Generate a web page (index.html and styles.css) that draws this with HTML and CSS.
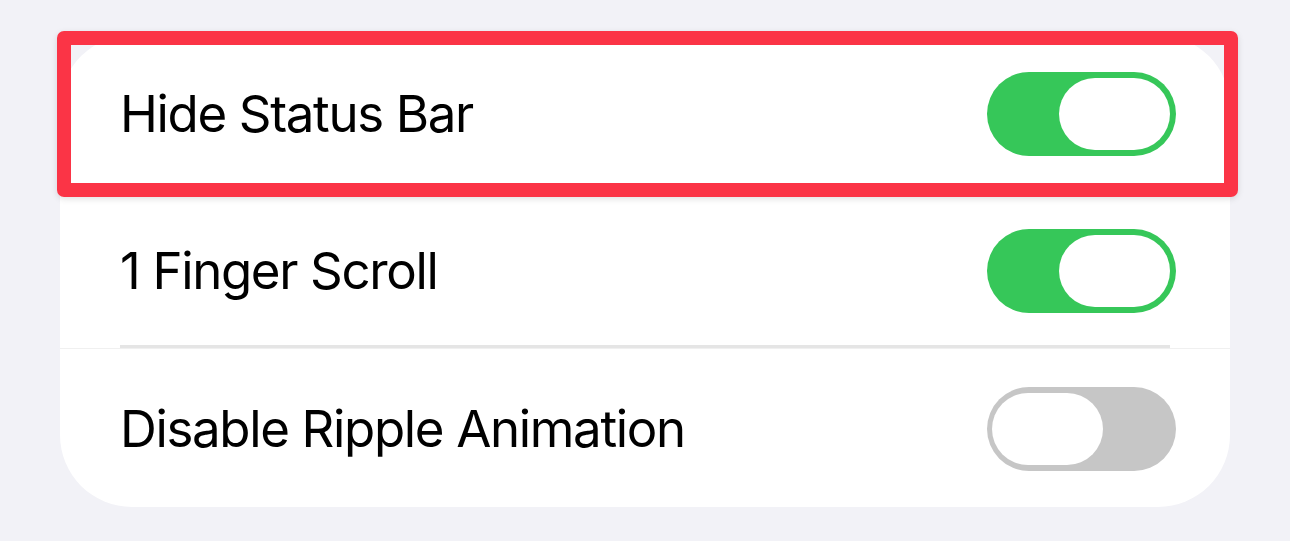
FILE: index.html
```html
<!DOCTYPE html>
<html>
<head>
<meta charset="utf-8">
<link rel="stylesheet" href="styles.css">
</head>
<body>
<div class="card">
  <div class="row highlighted">
    <span class="label">Hide Status Bar</span>
    <span class="toggle on"><span class="knob"></span></span>
    <div class="highlight"></div>
  </div>
  <div class="row">
    <span class="label">1 Finger Scroll</span>
    <span class="toggle on"><span class="knob"></span></span>
  </div>
  <div class="sep"></div>
  <div class="row">
    <span class="label">Disable Ripple Animation</span>
    <span class="toggle off"><span class="knob"></span></span>
  </div>
</div>
</body>
</html>
```
FILE: styles.css
```css
html, body {
  margin: 0;
  padding: 0;
  background: #f2f2f7;
  width: 1290px;
  height: 541px;
  overflow: hidden;
}
.card {
  margin: 35px 0 0 60px;
  width: 1170px;
  background: #ffffff;
  border-radius: 72px;
  display: flex;
  flex-direction: column;
}
.row {
  position: relative;
  height: 157px;
  display: flex;
  align-items: center;
  justify-content: space-between;
  padding: 0 54px 0 60px;
}
.label {
  font-family: Inter, "Noto Sans", sans-serif;
  font-size: 51px;
  color: #000;
  letter-spacing: -1.35px;
}
.toggle {
  width: 189px;
  height: 84px;
  border-radius: 42px;
  box-sizing: border-box;
  padding: 6px;
  display: flex;
}
.toggle.on {
  background: #36c759;
  justify-content: flex-end;
}
.toggle.off {
  background: #c6c6c6;
  justify-content: flex-start;
  padding: 6px 5px;
}
.knob {
  width: 111px;
  height: 72px;
  border-radius: 36px;
  background: #fff;
}
.sep {
  height: 4px;
  margin-top: -4px;
  margin-bottom: 1px;
  position: relative;
  background: linear-gradient(to bottom, transparent 0, transparent 3px, #f0f0f0 3px, #f0f0f0 4px);
}
.sep::before {
  content: "";
  display: block;
  margin-left: 60px;
  width: 1050px;
  height: 3px;
  background: #e5e5e5;
}
.highlight {
  position: absolute;
  left: -3px;
  top: -4px;
  width: 1181px;
  height: 166px;
  box-sizing: border-box;
  border: 14px solid #fb3446;
  border-radius: 7px;
  box-shadow: 0 2px 6px rgba(0,0,0,0.12);
  pointer-events: none;
}
```
